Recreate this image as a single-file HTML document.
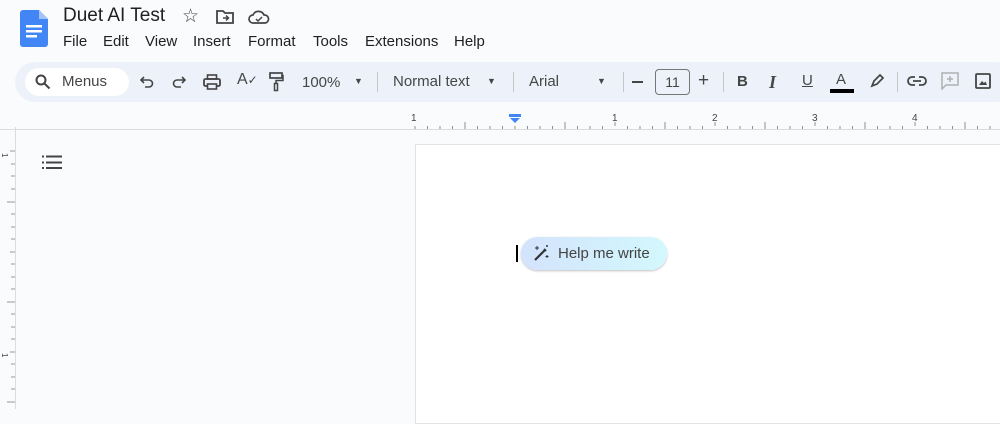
<!DOCTYPE html><html><head><style>
*{box-sizing:border-box;margin:0;padding:0}
body{width:1000px;height:409px;overflow:hidden;background:#f9fbfd;font-family:"Liberation Sans",sans-serif;position:relative;color:#1f1f1f}
.a{position:absolute}
.menu span{position:absolute;top:0}
.tb{left:15px;top:62px;width:1000px;height:40px;background:#edf2fa;border-radius:20px}
.ic{position:absolute;color:#444746;font-size:15px}
.sep{position:absolute;top:72px;width:1px;height:20px;background:#c7c7c7}
</style></head><body>
<svg class="a" style="left:20px;top:10px" width="28" height="37" viewBox="0 0 28 37"><path d="M3 0h16l9 9v25a3 3 0 0 1-3 3H3a3 3 0 0 1-3-3V3a3 3 0 0 1 3-3z" fill="#4285f4"/><path d="M19 0v9h9z" fill="#a1c2fa"/><rect x="6" y="15" width="16" height="2.5" fill="#fff"/><rect x="6" y="20" width="16" height="2.5" fill="#fff"/><rect x="6" y="25" width="11" height="2.5" fill="#fff"/></svg>
<div class="a" style="left:63px;top:5px;font-size:19px">Duet AI Test</div>
<div class="a" style="left:182px;top:5px;font-size:19px;color:#444">☆</div>
<svg class="a" style="left:215px;top:9px" width="20" height="16" viewBox="0 0 20 16"><path d="M2 2h6l2 2h8v10H2z" fill="none" stroke="#444" stroke-width="1.8"/><path d="M8 9h6M11 6.5l2.5 2.5-2.5 2.5" stroke="#444" stroke-width="1.5" fill="none"/></svg>
<svg class="a" style="left:248px;top:9px" width="22" height="16" viewBox="0 0 22 16"><path d="M5 14a4 4 0 0 1 0-8 6 6 0 0 1 11 0 4 4 0 0 1 1 8z" fill="none" stroke="#444" stroke-width="1.7"/><path d="M8 10l2 2 4-4" stroke="#444" stroke-width="1.5" fill="none"/></svg>
<div class="a menu" style="left:0;top:33px;font-size:15px;width:600px;height:20px"><span style="left:63px">File</span><span style="left:103px">Edit</span><span style="left:145px">View</span><span style="left:193px">Insert</span><span style="left:248px">Format</span><span style="left:313px">Tools</span><span style="left:365px">Extensions</span><span style="left:454px">Help</span></div>
<div class="a tb"></div>
<div class="a" style="left:25px;top:68px;width:104px;height:28px;background:#fff;border-radius:14px"></div>
<svg class="a" style="left:35px;top:74px" width="16" height="16" viewBox="0 0 16 16"><circle cx="6" cy="6" r="4.5" fill="none" stroke="#444" stroke-width="2"/><path d="M9.5 9.5l5 5" stroke="#444" stroke-width="2"/></svg>
<div class="ic" style="left:62px;top:73px;font-size:15px">Menus</div>
<svg class="a" style="left:140px;top:75px" width="14" height="14" viewBox="0 0 14 14"><path d="M4 2L1 5l3 3M1 5h8a3.5 3.5 0 0 1 0 7H5" fill="none" stroke="#444" stroke-width="1.6"/></svg>
<svg class="a" style="left:172px;top:75px" width="14" height="14" viewBox="0 0 14 14"><path d="M10 2l3 3-3 3M13 5H5a3.5 3.5 0 0 0 0 7h4" fill="none" stroke="#444" stroke-width="1.6"/></svg>
<svg class="a" style="left:203px;top:74px" width="18" height="16" viewBox="0 0 18 16"><rect x="1" y="5" width="16" height="7" rx="1.5" fill="none" stroke="#444" stroke-width="1.8"/><rect x="4.5" y="1" width="9" height="4" fill="none" stroke="#444" stroke-width="1.6"/><rect x="4.5" y="10" width="9" height="5" fill="#edf2fa" stroke="#444" stroke-width="1.6"/></svg>
<div class="ic" style="left:237px;top:71px;font-size:16px">A<span style="font-size:12px">✓</span></div>
<svg class="a" style="left:268px;top:72px" width="16" height="20" viewBox="0 0 16 20"><rect x="2" y="1" width="12" height="5" fill="none" stroke="#444" stroke-width="1.7"/><path d="M14 3.5h1v5H8v3" fill="none" stroke="#444" stroke-width="1.5"/><rect x="6.5" y="11.5" width="3" height="7" fill="none" stroke="#444" stroke-width="1.5"/></svg>
<div class="ic" style="left:302px;top:74px">100%</div>
<div class="ic" style="left:354px;top:76px;font-size:9px">▼</div>
<div class="sep" style="left:377px"></div>
<div class="ic" style="left:393px;top:73px">Normal text</div>
<div class="ic" style="left:487px;top:76px;font-size:9px">▼</div>
<div class="sep" style="left:513px"></div>
<div class="ic" style="left:529px;top:73px">Arial</div>
<div class="ic" style="left:597px;top:76px;font-size:9px">▼</div>
<div class="sep" style="left:623px"></div>
<div class="a" style="left:632px;top:81px;width:11px;height:2px;background:#444"></div>
<div class="a" style="left:655px;top:69px;width:35px;height:26px;border:1px solid #747775;border-radius:4px;font-size:14px;text-align:center;line-height:24px;color:#444">11</div>
<div class="ic" style="left:698px;top:70px;font-size:19px">+</div>
<div class="sep" style="left:723px"></div>
<div class="ic" style="left:737px;top:73px;font-weight:bold">B</div>
<div class="ic" style="left:769px;top:72px;font-style:italic;font-family:'Liberation Serif',serif;font-size:18px;font-weight:bold">I</div>
<div class="ic" style="left:802px;top:72px;text-decoration:underline">U</div>
<div class="ic" style="left:836px;top:71px">A</div>
<div class="a" style="left:830px;top:89px;width:24px;height:4px;background:#000"></div>
<svg class="a" style="left:869px;top:73px" width="16" height="16" viewBox="0 0 16 16"><path d="M3 13l2-5 6-6 3 3-6 6z" fill="none" stroke="#444" stroke-width="1.7"/></svg>
<div class="sep" style="left:897px"></div>
<svg class="a" style="left:907px;top:75px" width="20" height="12" viewBox="0 0 20 12"><path d="M8 2H5a4 4 0 0 0 0 8h3M12 2h3a4 4 0 0 1 0 8h-3M6 6h8" fill="none" stroke="#444" stroke-width="1.8"/></svg>
<svg class="a" style="left:941px;top:72px" width="18" height="18" viewBox="0 0 18 18"><path d="M1 1h16v12H5l-4 4z" fill="none" stroke="#b0b0b0" stroke-width="1.5"/><path d="M9 4v6M6 7h6" stroke="#b0b0b0" stroke-width="1.5"/></svg>
<svg class="a" style="left:975px;top:73px" width="16" height="16" viewBox="0 0 16 16"><rect x="1" y="1" width="14" height="14" rx="1" fill="none" stroke="#444" stroke-width="1.8"/><path d="M4 12l3-4 2 2 1.5-1.5L12 12z" fill="#444"/></svg>
<svg class="a" style="left:0;top:108px" width="1000" height="22">
<g stroke="#8f8f8f" stroke-width="1">
<path d="M415 18v4"/>
<g id="t"><path d="M427.5 18v3M440 18v3M452.5 18v3M465 14v8M477.5 18v3M490 18v3M502.5 18v3"/></g>
<use href="#t" x="100"/><use href="#t" x="200"/><use href="#t" x="300"/><use href="#t" x="400"/><use href="#t" x="500"/>
<path d="M515 18v4M615 14v4M715 14v4M815 14v4M915 14v4"/>
</g>
<path d="M0 21.5H1000" stroke="#dadce0"/>
<g font-size="10" fill="#444" font-family="Liberation Sans"><text x="411" y="13">1</text><text x="612" y="13">1</text><text x="712" y="13">2</text><text x="812" y="13">3</text><text x="912" y="13">4</text></g>
<path d="M509 6h12v3h-12zM510 10h10l-5 5z" fill="#4285f4"/>
</svg>
<div class="a" style="left:15px;top:127px;width:1px;height:282px;background:#dadce0"></div>
<svg class="a" style="left:0;top:127px" width="15" height="282"><g stroke="#999"><path d="M10 24h5M11 37h4M11 49h4M11 62h4M7 75h8M11 87h4M11 100h4M11 112h4M10 125h5M11 137h4M11 150h4M11 162h4M7 175h8M11 187h4M11 200h4M11 212h4M10 225h5M11 237h4M11 250h4M11 262h4M7 275h8"/></g><text x="7" y="27" font-size="8" fill="#444" transform="rotate(90 5 24)">1</text><text x="7" y="227" font-size="8" fill="#444" transform="rotate(90 5 224)">1</text></svg>
<svg class="a" style="left:42px;top:154px" width="20" height="16" viewBox="0 0 20 16"><g fill="#444"><rect x="0" y="1.5" width="2" height="2"/><rect x="4" y="1.5" width="16" height="2"/><rect x="0" y="7.5" width="2" height="2"/><rect x="4" y="7.5" width="16" height="2"/><rect x="0" y="13" width="2" height="2"/><rect x="4" y="13" width="16" height="2"/></g></svg>
<div class="a" style="left:415px;top:144px;width:600px;height:280px;background:#fff;border:1px solid #e3e3e3"></div>
<div class="a" style="left:516px;top:245px;width:2px;height:17px;background:#000"></div>
<div class="a" style="left:521px;top:237px;width:146px;height:33px;border-radius:17px;background:linear-gradient(90deg,#d3e3fd,#d3f8fd);box-shadow:0 1px 2px rgba(0,0,0,.25)"></div>
<svg class="a" style="left:533px;top:245px" width="17" height="17" viewBox="0 0 17 17"><path d="M2 15L12 5" stroke="#333" stroke-width="2.2"/><path d="M11 4l2 2" stroke="#333" stroke-width="2"/><path d="M4 1v4M2 3h4M14 10v3M12.5 11.5h3M14 0v2M13 1h2" stroke="#333" stroke-width="1"/></svg>
<div class="a" style="left:558px;top:245px;font-size:15px;color:#444">Help me write</div>
</body></html>
